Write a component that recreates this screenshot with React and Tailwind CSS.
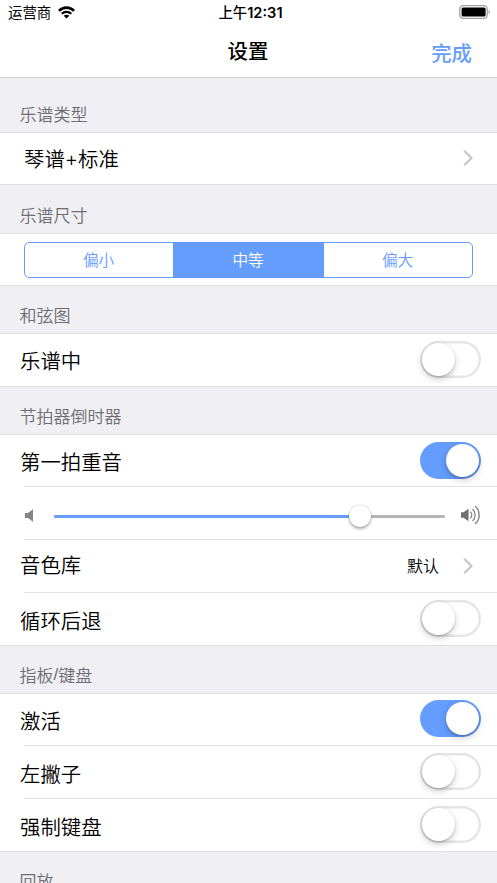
import { useState } from "react";

const sizes = ["偏小", "中等", "偏大"];

function StatusBar() {
  return (
    <div className="grid grid-cols-3 h-[25px] items-center text-[14.4px] leading-5">
      <div className="flex items-center pl-2 pb-px gap-[7px]">
        <span className="whitespace-nowrap">运营商</span>
        <svg width="17" height="13" viewBox="0 0 17 13" fill="none">
          <path d="M.9 4.9C5.1 .5 11.9 .5 16.1 4.9" stroke="black" strokeWidth="2.6" />
          <path d="M3.7 7.8C6.4 5.2 10.6 5.2 13.3 7.8" stroke="black" strokeWidth="2.2" />
          <path d="M8.5 12.6L5.7 9.8C7.2 8.3 9.8 8.3 11.3 9.8Z" fill="black" />
        </svg>
      </div>
      <div className="pl-1 text-center font-medium whitespace-nowrap">
        上午<span className="font-['Inter'] font-semibold text-[14.6px]">12:31</span>
      </div>
      <div className="flex justify-end pr-1.5">
        <svg width="32" height="14" viewBox="0 0 32 14" className="mb-0.5">
          <rect x=".8" y=".7" width="27.4" height="12.6" rx="3.6" fill="none" stroke="#a0a0a0" strokeWidth="1.3" />
          <rect x="2.6" y="2.5" width="24" height="9" rx="1.6" fill="black" />
          <path d="M29.6 4.8C31.2 5.4 31.2 8.6 29.6 9.2Z" fill="#a0a0a0" />
        </svg>
      </div>
    </div>
  );
}

function SectionHeader({ children, className = "h-12" }) {
  return (
    <div
      className={`flex items-end shrink-0 border-b border-[#e0e0e4] px-[19.5px] pb-1.5 text-[17px] leading-6 font-[350] text-[#6d6d72] ${className}`}
    >
      {children}
    </div>
  );
}

function Chevron() {
  return (
    <svg width="11" height="18" viewBox="0 0 11 18" fill="none" className="mb-px">
      <path d="M1.2 1.8L8.5 9L1.2 16.2" stroke="#c7c7cc" strokeWidth="2.3" />
    </svg>
  );
}

// thin line that starts a little inside the row
function Separator() {
  return <div className="ml-6 h-px shrink-0 bg-[#e4e4e6]" />;
}

function Toggle({ defaultOn = false, className = "" }) {
  const [on, setOn] = useState(defaultOn);

  return (
    <button
      onClick={() => setOn(!on)}
      className={`flex items-center w-[61px] h-[37px] px-0.5 rounded-full ${
        on ? "justify-end bg-[#659dff]" : "justify-start bg-white shadow-[inset_0_0_0_2.4px_#e5e5e5]"
      } ${className}`}
    >
      <span className="size-[33px] rounded-full bg-white shadow-[0_3px_7px_rgba(0,0,0,0.2),0_1px_2px_rgba(0,0,0,0.18)]" />
    </button>
  );
}

function ToggleRow({ label, defaultOn, className = "h-[52px]", toggleClass = "mt-[7px]", labelClass = "mt-3" }) {
  return (
    <div className={`flex justify-between items-start shrink-0 pl-5 pr-4 ${className}`}>
      <span className={`text-[20.4px] leading-[30px] font-[350] ${labelClass}`}>{label}</span>
      <Toggle defaultOn={defaultOn} className={toggleClass} />
    </div>
  );
}

function VolumeSlider({ value }) {
  return (
    <div className="flex items-center shrink-0 h-[52px] pl-[25px] pr-4">
      <svg width="9" height="13" viewBox="0 0 9 13" className="mt-1">
        <path d="M0 4H3L8 .3V12.7L3 9H0Z" fill="#858585" />
      </svg>
      <div className="relative ml-5 w-[391px] h-[3px] mt-[7px] mb-px rounded-full bg-[#b5b5b5]">
        <div className="h-full rounded-full bg-[#659dff]" style={{ width: `${value}%` }} />
        <div
          className="absolute top-1/2 -translate-1/2 size-[22px] rounded-full bg-white shadow-[0_2px_3px_rgba(0,0,0,0.32),0_0_1px_rgba(0,0,0,0.35)]"
          style={{ left: `${value}%` }}
        />
      </div>
      <svg width="20" height="20" viewBox="0 0 20 20" className="ml-4 mt-1" fill="none">
        <path d="M0 7.2H2.6L7.5 3.8V16.2L2.6 12.8H0Z" fill="#707070" />
        <path d="M9.3 6.8C11.3 8.5 11.3 11.5 9.3 13.2" stroke="#858585" strokeWidth="1.2" />
        <path d="M11.5 4C15 7 15 13 11.5 16" stroke="#858585" strokeWidth="1.3" />
        <path d="M14 1.2C19.6 5.4 19.6 14.6 14 18.8" stroke="#858585" strokeWidth="1.4" />
      </svg>
    </div>
  );
}

export default function App() {
  const [size, setSize] = useState(1);

  return (
    <div className="flex flex-col w-[497px] h-[883px] overflow-hidden bg-[#efeff4] text-black font-['Noto_Sans_CJK_SC',sans-serif]">
      <header className="shrink-0 h-[78px] bg-white border-b border-[#cfcfd2]">
        <StatusBar />
        <div className="grid grid-cols-3 text-[20.4px] leading-[30px]">
          <h1 className="col-start-2 mt-2.5 pr-px text-center font-medium">设置</h1>
          <button className="mt-3 pr-[25px] text-right font-medium text-[#659dff]">完成</button>
        </div>
      </header>

      <SectionHeader className="h-[55px]">乐谱类型</SectionHeader>
      <div className="flex items-center justify-between shrink-0 h-[52px] pl-6 pr-[23px] bg-white border-b border-[#e0e0e4]">
        <span className="text-[20.4px] leading-[30px] font-[350]">
          琴谱<span className="font-['Inter'] align-[1px]">+</span>标准
        </span>
        <Chevron />
      </div>

      <SectionHeader className="h-[49px]">乐谱尺寸</SectionHeader>
      <div className="shrink-0 h-[52px] px-6 pt-2 bg-white border-b border-[#e0e0e4]">
        <div className="grid grid-cols-[148px_151px_1fr] h-9 rounded-[5px] border-[1.5px] border-[#659dff] overflow-hidden">
          {sizes.map((item, i) => (
            <button
              key={item}
              onClick={() => setSize(i)}
              className={`pr-px text-[15.6px] font-[350] ${size === i ? "bg-[#659dff] text-white" : "text-[#659dff]"}`}
            >
              {item}
            </button>
          ))}
        </div>
      </div>

      <SectionHeader>和弦图</SectionHeader>
      <div className="shrink-0 bg-white border-b border-[#e0e0e4]">
        <ToggleRow label="乐谱中" labelClass="mt-[11px]" />
      </div>

      <SectionHeader>节拍器倒时器</SectionHeader>
      <div className="flex flex-col shrink-0 bg-white border-b border-[#e0e0e4]">
        <ToggleRow label="第一拍重音" defaultOn className="h-[51px]" toggleClass="mt-[6.5px]" labelClass="mt-[11px]" />
        <Separator />
        <VolumeSlider value={78.2} />
        <Separator />
        <div className="flex items-center shrink-0 h-[52px] pl-5 pr-[23px]">
          <span className="flex-1 text-[20.4px] leading-[30px] font-[350] -mt-1">音色库</span>
          <span className="text-base font-[350] mb-0.5 mr-6">默认</span>
          <Chevron />
        </div>
        <Separator />
        <ToggleRow label="循环后退" />
      </div>

      <SectionHeader>
        指板<span className="font-['Liberation_Sans']">/</span>键盘
      </SectionHeader>
      <div className="flex flex-col shrink-0 bg-white border-b border-[#e0e0e4]">
        <ToggleRow label="激活" defaultOn className="h-[51px]" toggleClass="mt-1.5" labelClass="mt-[11px]" />
        <Separator />
        <ToggleRow label="左撇子" />
        <Separator />
        <ToggleRow label="强制键盘" />
      </div>

      <SectionHeader>回放</SectionHeader>
    </div>
  );
}
